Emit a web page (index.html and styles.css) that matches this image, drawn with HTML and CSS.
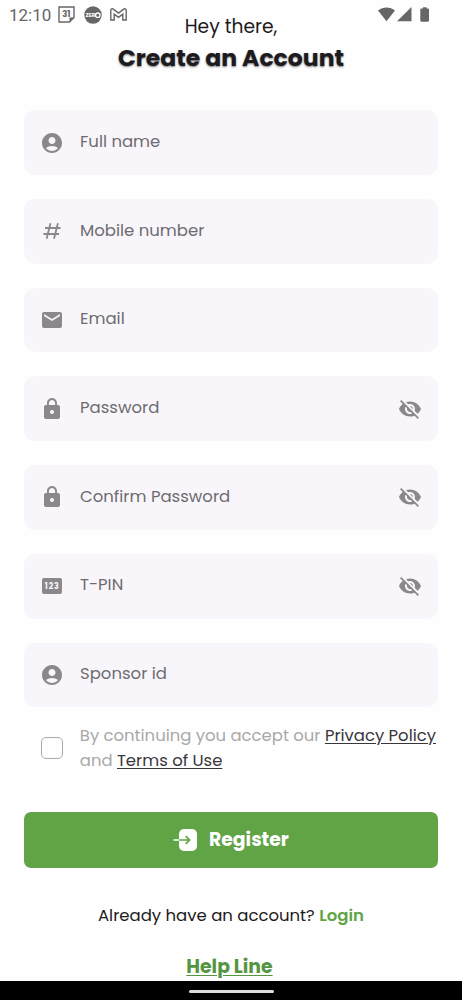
FILE: index.html
```html
<!DOCTYPE html>
<html lang="en">
<head>
    <meta charset="UTF-8">
    <meta name="viewport" content="width=device-width, initial-scale=1.0">
    <title>Create an Account</title>
    <link rel="stylesheet" href="styles.css">
</head>
<body>
    <!-- shared icons -->
    <svg class="defs" width="0" height="0">
        <symbol id="user" viewBox="0 0 24 24">
            <path d="M12 2C6.48 2 2 6.48 2 12s4.48 10 10 10 10-4.48 10-10S17.52 2 12 2zm0 4c1.93 0 3.5 1.57 3.5 3.5S13.93 13 12 13s-3.5-1.57-3.5-3.5S10.070 6 12 6zm0 14c-2.03 0-4.43-.82-6.140-2.88C7.550 15.8 9.680 15 12 15s4.450.8 6.140 2.120C16.430 19.180 14.030 20 12 20z"/>
        </symbol>
        <symbol id="hash" viewBox="0 0 24 24">
            <path d="M10.500 4.200L6.600 19.800M17.900 4.200L14 19.800M5 9h15.500M3.500 15h15.500" fill="none" stroke="currentColor" stroke-width="1.800"/>
        </symbol>
        <symbol id="mail" viewBox="0 0 24 24">
            <path d="M20 4H4c-1.100 0-2 .9-2 2v12c0 1.100.9 2 2 2h16c1.100 0 2-.9 2-2V6c0-1.100-.9-2-2-2zm0 4l-8 5-8-5V6l8 5 8-5v2z"/>
        </symbol>
        <symbol id="lock" viewBox="0 0 24 24">
            <path d="M18 8h-1V6c0-2.760-2.240-5-5-5S7 3.240 7 6v2H6c-1.100 0-2 .9-2 2v10c0 1.100.9 2 2 2h12c1.100 0 2-.9 2-2V10c0-1.100-.9-2-2-2zm-6 9c-1.100 0-2-.9-2-2s.9-2 2-2 2 .9 2 2-.9 2-2 2zm3.100-9H8.900V6c0-1.710 1.390-3.100 3.100-3.100s3.100 1.390 3.100 3.100v2z"/>
        </symbol>
        <symbol id="eye-off" viewBox="0 0 24 24">
            <path d="M12 7c2.760 0 5 2.240 5 5 0 .65-.13 1.260-.36 1.830l2.920 2.920c1.510-1.260 2.700-2.890 3.430-4.750-1.730-4.390-6-7.500-11-7.500-1.400 0-2.740.25-3.980.7l2.160 2.160C10.740 7.130 11.350 7 12 7zM2 4.270l2.280 2.280.46.46C3.080 8.300 1.780 10.020 1 12c1.730 4.390 6 7.500 11 7.500 1.550 0 3.030-.3 4.380-.84l.42.42L19.730 22 21 20.730 3.270 3 2 4.270zM7.530 9.800l1.550 1.550c-.05.21-.08.43-.08.65 0 1.660 1.340 3 3 3 .22 0 .44-.03.65-.08l1.550 1.550c-.67.33-1.410.53-2.200.53-2.760 0-5-2.240-5-5 0-.79.2-1.530.53-2.200zm4.310-.78l3.150 3.150.02-.16c0-1.660-1.340-3-3-3l-.17.01z"/>
        </symbol>
    </svg>

    <div class="status-bar">
        <span class="time">12:10</span>
        <svg class="calendar" width="17" height="17" viewBox="0 0 17 17">
            <path d="M1 1h15v10.500L11.500 16H1z" fill="none" stroke="#666" stroke-width="1.400"/>
            <path d="M11.500 16v-4.500H16z" fill="#666"/>
            <text x="8.300" y="11.300" text-anchor="middle" font-size="8.500" font-weight="700" fill="#666">31</text>
        </svg>
        <svg class="zero" width="18" height="18" viewBox="0 0 18 18">
            <circle cx="9" cy="9" r="8.700" fill="#666"/>
            <text x="1.500" y="11.200" textLength="10" lengthAdjust="spacingAndGlyphs" font-size="5.500" font-weight="700" fill="#fff">ZER</text>
            <circle cx="13.800" cy="9.200" r="2.200" fill="none" stroke="#fff" stroke-width="1.300"/>
        </svg>
        <svg class="gmail" width="17" height="13" viewBox="0 0 17 13">
            <path d="M.8 12V2.200C.8.8 2.300.3 3.300 1.100L8.500 5l5.200-3.900c1-.8 2.500-.3 2.500 1.100V12h-3.400V6.200L8.500 9.400 4.200 6.200V12z" fill="none" stroke="#666" stroke-width="1.400"/>
        </svg>
        <svg class="signals" width="54" height="16" viewBox="0 0 54 16">
            <path d="M1 3.500C6-.4 13-.4 18 3.500L9.500 14.300z"/>
            <path d="M34.500 0v14.300H20z"/>
            <path d="M46 .2h3.500v1.400h1.300c.7 0 1.200.5 1.200 1.200v10.800c0 .7-.5 1.200-1.200 1.200h-6.300c-.7 0-1.200-.5-1.200-1.200V2.800c0-.7.5-1.200 1.200-1.200H46z"/>
        </svg>
    </div>

    <div class="container">
        <p class="greeting">Hey there,</p>
        <h1>Create an Account</h1>

        <form>
            <div class="field">
                <svg class="icon"><use href="#user"/></svg>
                <label>Full name</label>
            </div>
            <div class="field">
                <svg class="icon"><use href="#hash"/></svg>
                <label>Mobile number</label>
            </div>
            <div class="field">
                <svg class="icon"><use href="#mail"/></svg>
                <label>Email</label>
            </div>
            <div class="field">
                <svg class="icon"><use href="#lock"/></svg>
                <label>Password</label>
                <svg class="icon eye"><use href="#eye-off"/></svg>
            </div>
            <div class="field">
                <svg class="icon"><use href="#lock"/></svg>
                <label>Confirm Password</label>
                <svg class="icon eye"><use href="#eye-off"/></svg>
            </div>
            <div class="field">
                <svg class="icon" viewBox="0 0 24 24">
                    <rect x="2" y="4" width="20" height="16" rx="2"/>
                    <text x="12.300" y="14.800" text-anchor="middle" font-size="7.800" font-weight="700" letter-spacing="1" fill="#f8f6fb">123</text>
                </svg>
                <label>T-PIN</label>
                <svg class="icon eye"><use href="#eye-off"/></svg>
            </div>
            <div class="field">
                <svg class="icon"><use href="#user"/></svg>
                <label>Sponsor id</label>
            </div>

            <div class="terms">
                <span class="checkbox"></span>
                <p>By continuing you accept our <a href="#">Privacy Policy</a><br>and <a href="#">Terms of Use</a></p>
            </div>

            <button type="button">
                <svg width="25" height="24" viewBox="0 0 25 24">
                    <rect x="6" y="1" width="18" height="22" rx="5" fill="#fff"/>
                    <path d="M.5 12H6" stroke="#fff" stroke-width="1.600"/>
                    <path d="M6 12h10.500M12.700 8.200l3.900 3.800-3.900 3.800" fill="none" stroke="#60a446" stroke-width="1.700"/>
                </svg>
                <span>Register</span>
            </button>
        </form>

        <p class="login">Already have an account? <a href="#">Login</a></p>
        <a class="help" href="#">Help Line</a>
    </div>

    <div class="nav-bar"><span></span></div>
</body>
</html>
```

FILE: styles.css
```css
* {
    box-sizing: border-box;
}
body {
    font-family: Poppins, Inter, sans-serif;
    margin: 0;
    height: 1000px;
    overflow: hidden;
    display: flex;
    flex-direction: column;
    background-color: #fefefe;
    color: #1d1a20;
}
p, h1 {
    margin: 0;
}
.defs {
    position: absolute;
}
.status-bar {
    position: absolute;
    top: 0;
    left: 0;
    width: 100%;
    height: 29px;
    padding: 0 31px 0 9px;
    display: flex;
    align-items: center;
    color: #666;
}
.time {
    font-family: Roboto, sans-serif;
    font-size: 17px;
    width: 49px;
    line-height: 30px;
}
.zero {
    margin-left: 9px;
}
.gmail {
    margin-left: 8px;
}
.signals {
    margin-left: auto;
    fill: #666;
}
.container {
    flex: 1;
    padding: 12px 23.600px 0 23.500px;
    display: flex;
    flex-direction: column;
    align-items: center;
}
.greeting {
    font-size: 18.700px;
    line-height: 29px;
}
h1 {
    font-size: 23.500px;
    font-weight: 700;
    line-height: 34px;
    text-shadow: 0 1px 2px #777;
}
form {
    width: 100%;
    margin-top: 35.400px;
}
.field {
    height: 64.700px;
    margin-bottom: 24px;
    padding: 0 16.500px 0 16px;
    display: flex;
    align-items: center;
    background-color: #f8f6fa;
    border-radius: 11px;
}
.icon {
    width: 24px;
    height: 24px;
    fill: #8a888c;
    color: #8a888c;
}
.field label {
    margin-left: 16.500px;
    padding-bottom: 2.800px;
    font-size: 16.500px;
    color: #6e6c70;
}
.eye {
    margin-left: auto;
}
.terms {
    display: flex;
    align-items: center;
    margin-top: -8.500px;
    height: 50px;
    font-size: 16.470px;
    line-height: 25px;
    color: #a9a8aa;
    white-space: nowrap;
}
.checkbox {
    width: 22px;
    height: 22px;
    margin: 0 17.300px 0 17px;
    border: 1.500px solid #aaa8ac;
    border-radius: 5px;
}
.terms a {
    color: #39373b;
    text-underline-offset: 2px;
}
button {
    width: 100%;
    height: 56.500px;
    margin-top: 38.900px;
    padding: 0;
    border: none;
    border-radius: 7px;
    background-color: #60a446;
    color: white;
    font-family: inherit;
    font-size: 18.800px;
    font-weight: 700;
    display: flex;
    justify-content: center;
    align-items: center;
    gap: 11px;
}
.login {
    margin-top: 34.800px;
    font-size: 16.500px;
    line-height: 26px;
}
.login a {
    color: #60a446;
    font-weight: 600;
    text-decoration: none;
}
.help {
    margin-top: 24px;
    margin-right: 3px;
    font-size: 18.800px;
    font-weight: 700;
    line-height: 28px;
    color: #559541;
    text-underline-offset: 2px;
    text-decoration-thickness: 1px;
}
.nav-bar {
    height: 19px;
    display: flex;
    justify-content: center;
    align-items: center;
    background-color: #000;
}
.nav-bar span {
    width: 85px;
    height: 3px;
    margin-top: 2px;
    border-radius: 2px;
    background-color: #ddd;
}
```
